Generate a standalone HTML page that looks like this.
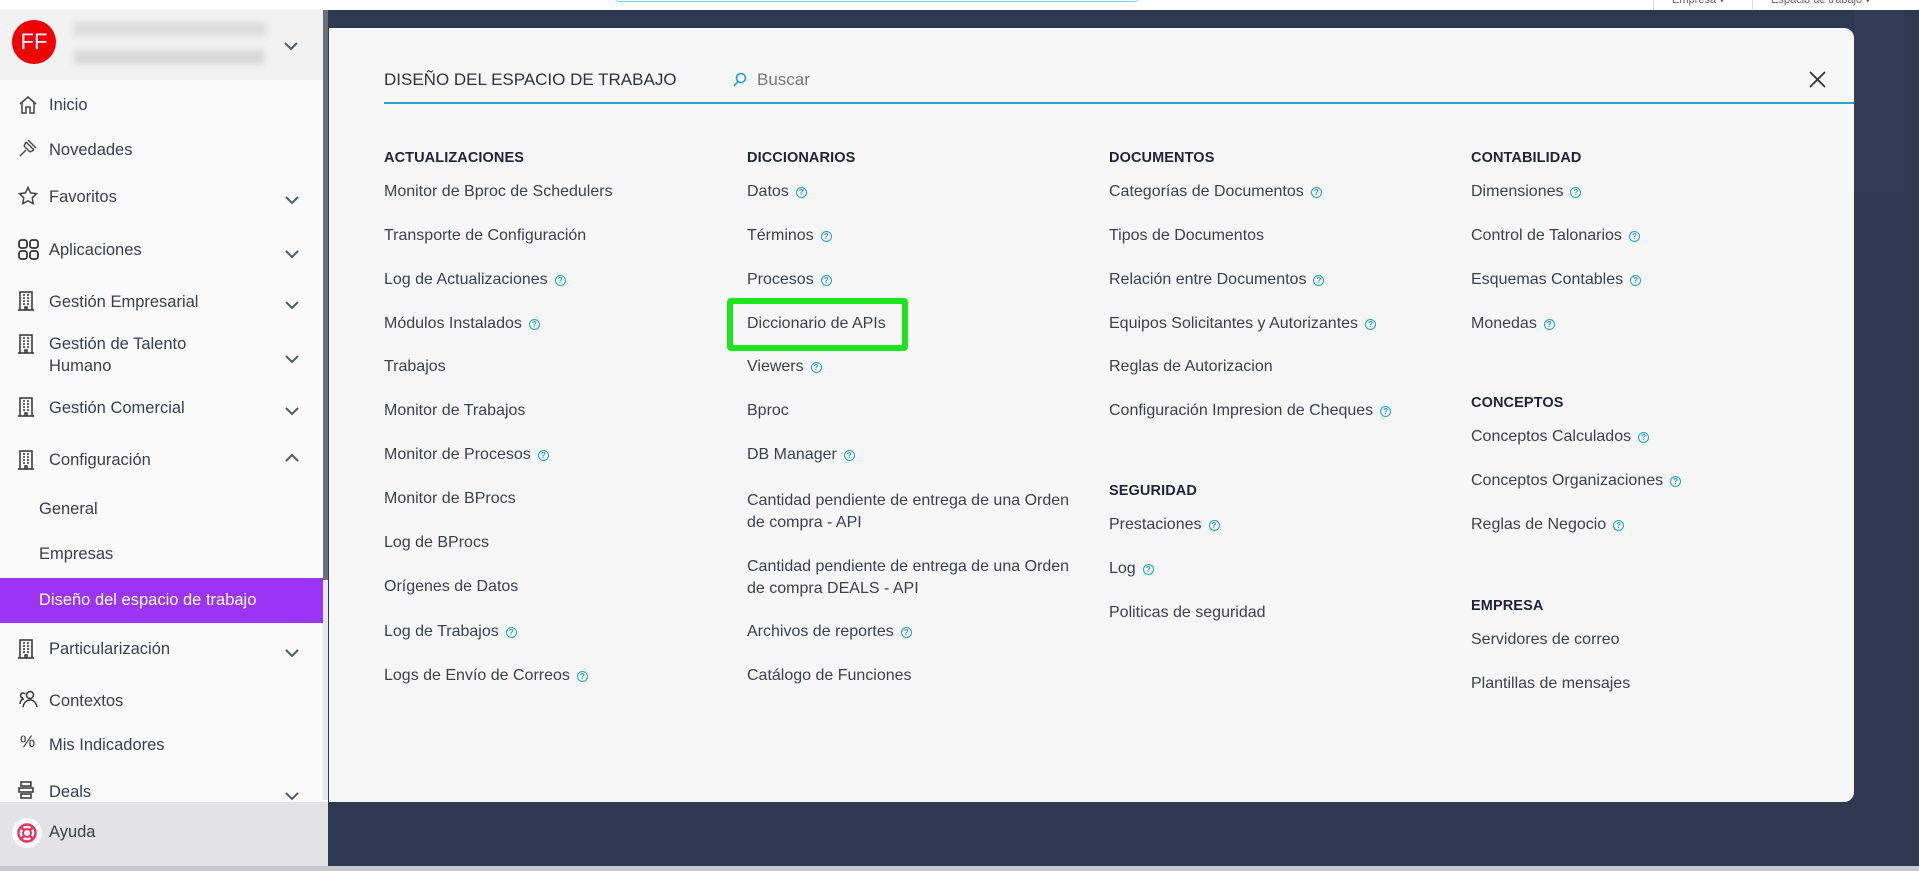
<!DOCTYPE html>
<html><head><meta charset="utf-8"><style>
*{margin:0;padding:0;box-sizing:border-box}
body{width:1919px;height:871px;overflow:hidden;background:#fff;font-family:"Liberation Sans",sans-serif;position:relative;color:#3a3d4a}
.a{position:absolute;white-space:nowrap}
.t{position:absolute;white-space:nowrap;font-size:16px;line-height:22px;color:#3c3f4c}
.h{position:absolute;white-space:nowrap;font-size:14.5px;font-weight:bold;line-height:22px;color:#1f2238;letter-spacing:.1px}
.q{display:inline-block;width:11px;height:11px;border:1.3px solid #1fa0c8;border-radius:50%;font-size:8px;line-height:9px;text-align:center;color:#1fa0c8;margin-left:7px;vertical-align:1px;font-weight:bold}
.s{position:absolute;left:49px;font-size:16.5px;line-height:22px;color:#3a3d4a;white-space:nowrap}
.ic{position:absolute;left:18px}
.ch{position:absolute;left:285px}
</style></head><body>
<div class="a" style="left:0;top:0;width:1919px;height:10px;background:#fff"></div>
<div class="a" style="left:616px;top:-10px;width:522px;height:12px;border:1px solid #7fd6e6;border-radius:3px"></div>
<div class="a" style="left:1653px;top:0;width:1px;height:10px;background:#ddd"></div>
<div class="a" style="left:1752px;top:0;width:1px;height:10px;background:#ddd"></div>
<div class="a" style="left:1672px;top:-7px;font-size:11px;color:#666">Empresa ▾</div>
<div class="a" style="left:1771px;top:-7px;font-size:11px;color:#666">Espacio de trabajo ▾</div>
<div class="a" style="left:328px;top:10px;width:1591px;height:856px;background:#2d3950"></div>
<div class="a" style="left:1854px;top:10px;width:50px;height:182px;background:#313d54"></div>
<div class="a" style="left:0;top:866px;width:1919px;height:5px;background:#c9c9cc"></div>
<div class="a" style="left:0;top:10px;width:323px;height:856px;background:#fbfbfb"></div>
<div class="a" style="left:0;top:10px;width:323px;height:70px;background:#f2f2f3"></div>
<div class="a" style="left:323px;top:10px;width:5px;height:570px;background:#6b7078"></div>
<div class="a" style="left:323px;top:580px;width:5px;height:220px;background:#e8e8ea"></div>
<div class="a" style="left:12px;top:20px;width:44px;height:44px;border-radius:50%;background:#f00000;color:#fff;font-size:22px;line-height:44px;text-align:center">FF</div>
<div class="a" style="left:74px;top:22px;width:192px;height:14px;background:#ddd;filter:blur(3px)"></div>
<div class="a" style="left:74px;top:50px;width:190px;height:14px;background:#d8d8d8;filter:blur(3px)"></div>
<svg class="a" style="left:284px;top:42px" width="14" height="9"><path d="M1 1l6 6 6-6" fill="none" stroke="#555b66" stroke-width="2"/></svg>

<svg class="ic" style="top:95px" width="20" height="20" viewBox="0 0 20 20"><path d="M2 9l8-7 8 7M4 7v11h4v-6h4v6h4V7" fill="none" stroke="#444" stroke-width="1.5"/></svg>
<div class="s" style="top:94px">Inicio</div>
<svg class="ic" style="top:138px" width="20" height="20" viewBox="0 0 20 20"><path d="M2 18l6-6M6 8l6 6M8 4l8 8M10 2l8 8M8 4l-2 4M12 14l4-2" fill="none" stroke="#444" stroke-width="1.4"/></svg>
<div class="s" style="top:139px">Novedades</div>
<svg class="ic" style="top:186px" width="20" height="20" viewBox="0 0 20 20"><path d="M10 1.5l2.6 5.4 5.9.8-4.3 4.1 1 5.8L10 14.8 4.8 17.6l1-5.8L1.5 7.7l5.9-.8z" fill="none" stroke="#444" stroke-width="1.5"/></svg>
<div class="s" style="top:186px">Favoritos</div>
<svg class="ic" style="top:239px" width="22" height="22" viewBox="0 0 22 22"><rect x="1" y="1" width="8" height="8" rx="2.5" fill="none" stroke="#333" stroke-width="1.8"/><rect x="12" y="1" width="8" height="8" rx="2.5" fill="none" stroke="#333" stroke-width="1.8"/><rect x="1" y="12" width="8" height="8" rx="2.5" fill="none" stroke="#333" stroke-width="1.8"/><rect x="12" y="12" width="8" height="8" rx="2.5" fill="none" stroke="#333" stroke-width="1.8"/></svg>
<div class="s" style="top:239px">Aplicaciones</div>
<div class="s" style="top:291px">Gestión Empresarial</div>
<div class="s" style="top:333px">Gestión de Talento</div>
<div class="s" style="top:355px">Humano</div>
<div class="s" style="top:397px">Gestión Comercial</div>
<div class="s" style="top:449px">Configuración</div>
<div class="s" style="left:39px;top:498px">General</div>
<div class="s" style="left:39px;top:543px">Empresas</div>
<div class="a" style="left:0;top:578px;width:323px;height:45px;background:#9b34f5"></div>
<div class="s" style="left:39px;top:589px;color:#fff">Diseño del espacio de trabajo</div>
<div class="s" style="top:638px">Particularización</div>
<svg class="ic" style="top:690px" width="22" height="20" viewBox="0 0 22 20"><circle cx="12" cy="5" r="3.5" fill="none" stroke="#333" stroke-width="1.5"/><path d="M5 17c1-5 4-7 7-7s6 2 7 7M2 14c0-3 2-5 4-5M5 8a2.5 2.5 0 1 1 2-4" fill="none" stroke="#333" stroke-width="1.5"/></svg>
<div class="s" style="top:690px">Contextos</div>
<div class="a" style="left:20px;top:732px;font-size:17px;color:#333">%</div>
<div class="s" style="top:734px">Mis Indicadores</div>
<svg class="ic" style="top:780px" width="18" height="20" viewBox="0 0 18 20"><rect x="3" y="2" width="10" height="4" fill="none" stroke="#333" stroke-width="1.5"/><rect x="1" y="8" width="14" height="4" fill="none" stroke="#333" stroke-width="1.5"/><rect x="3" y="14" width="10" height="4" fill="none" stroke="#333" stroke-width="1.5"/></svg>
<div class="s" style="top:781px">Deals</div>
<svg class="ic" style="top:291px" width="16" height="20" viewBox="0 0 16 20"><path d="M2 19V1h12v18M0 19h16M5 4h2M9 4h2M5 7h2M9 7h2M5 10h2M9 10h2M5 13h2M9 13h2M7 19v-3h2v3" fill="none" stroke="#333" stroke-width="1.5"/></svg>
<svg class="ic" style="top:334px" width="16" height="20" viewBox="0 0 16 20"><path d="M2 19V1h12v18M0 19h16M5 4h2M9 4h2M5 7h2M9 7h2M5 10h2M9 10h2M5 13h2M9 13h2M7 19v-3h2v3" fill="none" stroke="#333" stroke-width="1.5"/></svg>
<svg class="ic" style="top:397px" width="16" height="20" viewBox="0 0 16 20"><path d="M2 19V1h12v18M0 19h16M5 4h2M9 4h2M5 7h2M9 7h2M5 10h2M9 10h2M5 13h2M9 13h2M7 19v-3h2v3" fill="none" stroke="#333" stroke-width="1.5"/></svg>
<svg class="ic" style="top:450px" width="16" height="20" viewBox="0 0 16 20"><path d="M2 19V1h12v18M0 19h16M5 4h2M9 4h2M5 7h2M9 7h2M5 10h2M9 10h2M5 13h2M9 13h2M7 19v-3h2v3" fill="none" stroke="#333" stroke-width="1.5"/></svg>
<svg class="ic" style="top:639px" width="16" height="20" viewBox="0 0 16 20"><path d="M2 19V1h12v18M0 19h16M5 4h2M9 4h2M5 7h2M9 7h2M5 10h2M9 10h2M5 13h2M9 13h2M7 19v-3h2v3" fill="none" stroke="#333" stroke-width="1.5"/></svg>
<svg class="ch" style="top:196px" width="14" height="9"><path d="M1 1l6 6 6-6" fill="none" stroke="#555b66" stroke-width="2"/></svg>
<svg class="ch" style="top:250px" width="14" height="9"><path d="M1 1l6 6 6-6" fill="none" stroke="#555b66" stroke-width="2"/></svg>
<svg class="ch" style="top:301px" width="14" height="9"><path d="M1 1l6 6 6-6" fill="none" stroke="#555b66" stroke-width="2"/></svg>
<svg class="ch" style="top:355px" width="14" height="9"><path d="M1 1l6 6 6-6" fill="none" stroke="#555b66" stroke-width="2"/></svg>
<svg class="ch" style="top:407px" width="14" height="9"><path d="M1 1l6 6 6-6" fill="none" stroke="#555b66" stroke-width="2"/></svg>
<svg class="ch" style="top:453px" width="14" height="9"><path d="M1 8l6-6 6 6" fill="none" stroke="#555b66" stroke-width="2"/></svg>
<svg class="ch" style="top:649px" width="14" height="9"><path d="M1 1l6 6 6-6" fill="none" stroke="#555b66" stroke-width="2"/></svg>
<svg class="ch" style="top:792px" width="14" height="9"><path d="M1 1l6 6 6-6" fill="none" stroke="#555b66" stroke-width="2"/></svg>
<div class="a" style="left:0;top:802px;width:328px;height:64px;background:#e3e3e5"></div>
<div class="a" style="left:12px;top:818px;width:30px;height:30px;border-radius:50%;background:#fff"></div>
<svg class="a" style="left:16px;top:822px" width="22" height="22" viewBox="0 0 22 22"><circle cx="11" cy="11" r="8.5" fill="none" stroke="#f0305a" stroke-width="2.4"/><circle cx="11" cy="11" r="4" fill="none" stroke="#f0305a" stroke-width="2"/><path d="M5 5l3 3M17 5l-3 3M5 17l3-3M17 17l-3-3" stroke="#f0305a" stroke-width="2.4"/></svg>
<div class="s" style="top:821px">Ayuda</div>
<div class="a" style="left:329px;top:28px;width:1525px;height:774px;background:#f7f7f7;border-radius:0 10px 10px 0"></div>
<div class="a" style="left:384px;top:69px;font-size:17px;color:#2e3140;line-height:22px">DISEÑO DEL ESPACIO DE TRABAJO</div>
<svg class="a" style="left:733px;top:72px" width="14" height="16" viewBox="0 0 14 16"><circle cx="8" cy="6" r="4.5" fill="none" stroke="#1fa0c8" stroke-width="1.6"/><path d="M5 9.5L1 14" stroke="#1fa0c8" stroke-width="1.6"/></svg>
<div class="a" style="left:757px;top:69px;font-size:17px;color:#777;line-height:22px">Buscar</div>
<svg class="a" style="left:1809px;top:71px" width="17" height="17"><path d="M1 1l15 15M16 1L1 16" stroke="#333" stroke-width="1.8"/></svg>
<div class="a" style="left:384px;top:102px;width:1470px;height:2px;background:#2aa6c0"></div>

<div class="h" style="left:384px;top:147px">ACTUALIZACIONES</div>
<div class="t" style="left:384px;top:181px">Monitor de Bproc de Schedulers</div>
<div class="t" style="left:384px;top:225px">Transporte de Configuración</div>
<div class="t" style="left:384px;top:269px">Log de Actualizaciones<span class="q">?</span></div>
<div class="t" style="left:384px;top:313px">Módulos Instalados<span class="q">?</span></div>
<div class="t" style="left:384px;top:356px">Trabajos</div>
<div class="t" style="left:384px;top:400px">Monitor de Trabajos</div>
<div class="t" style="left:384px;top:444px">Monitor de Procesos<span class="q">?</span></div>
<div class="t" style="left:384px;top:488px">Monitor de BProcs</div>
<div class="t" style="left:384px;top:532px">Log de BProcs</div>
<div class="t" style="left:384px;top:576px">Orígenes de Datos</div>
<div class="t" style="left:384px;top:621px">Log de Trabajos<span class="q">?</span></div>
<div class="t" style="left:384px;top:665px">Logs de Envío de Correos<span class="q">?</span></div>

<div class="h" style="left:747px;top:147px">DICCIONARIOS</div>
<div class="t" style="left:747px;top:181px">Datos<span class="q">?</span></div>
<div class="t" style="left:747px;top:225px">Términos<span class="q">?</span></div>
<div class="t" style="left:747px;top:269px">Procesos<span class="q">?</span></div>
<div class="a" style="left:727px;top:298px;width:181px;height:53px;border:6px solid #1ee61e;border-radius:4px"></div>
<div class="t" style="left:747px;top:313px">Diccionario de APIs</div>
<div class="t" style="left:747px;top:356px">Viewers<span class="q">?</span></div>
<div class="t" style="left:747px;top:400px">Bproc</div>
<div class="t" style="left:747px;top:444px">DB Manager<span class="q">?</span></div>
<div class="t" style="left:747px;top:490px">Cantidad pendiente de entrega de una Orden</div>
<div class="t" style="left:747px;top:512px">de compra - API</div>
<div class="t" style="left:747px;top:556px">Cantidad pendiente de entrega de una Orden</div>
<div class="t" style="left:747px;top:578px">de compra DEALS - API</div>
<div class="t" style="left:747px;top:621px">Archivos de reportes<span class="q">?</span></div>
<div class="t" style="left:747px;top:665px">Catálogo de Funciones</div>

<div class="h" style="left:1109px;top:147px">DOCUMENTOS</div>
<div class="t" style="left:1109px;top:181px">Categorías de Documentos<span class="q">?</span></div>
<div class="t" style="left:1109px;top:225px">Tipos de Documentos</div>
<div class="t" style="left:1109px;top:269px">Relación entre Documentos<span class="q">?</span></div>
<div class="t" style="left:1109px;top:313px">Equipos Solicitantes y Autorizantes<span class="q">?</span></div>
<div class="t" style="left:1109px;top:356px">Reglas de Autorizacion</div>
<div class="t" style="left:1109px;top:400px">Configuración Impresion de Cheques<span class="q">?</span></div>
<div class="h" style="left:1109px;top:480px">SEGURIDAD</div>
<div class="t" style="left:1109px;top:514px">Prestaciones<span class="q">?</span></div>
<div class="t" style="left:1109px;top:558px">Log<span class="q">?</span></div>
<div class="t" style="left:1109px;top:602px">Politicas de seguridad</div>

<div class="h" style="left:1471px;top:147px">CONTABILIDAD</div>
<div class="t" style="left:1471px;top:181px">Dimensiones<span class="q">?</span></div>
<div class="t" style="left:1471px;top:225px">Control de Talonarios<span class="q">?</span></div>
<div class="t" style="left:1471px;top:269px">Esquemas Contables<span class="q">?</span></div>
<div class="t" style="left:1471px;top:313px">Monedas<span class="q">?</span></div>
<div class="h" style="left:1471px;top:392px">CONCEPTOS</div>
<div class="t" style="left:1471px;top:426px">Conceptos Calculados<span class="q">?</span></div>
<div class="t" style="left:1471px;top:470px">Conceptos Organizaciones<span class="q">?</span></div>
<div class="t" style="left:1471px;top:514px">Reglas de Negocio<span class="q">?</span></div>
<div class="h" style="left:1471px;top:595px">EMPRESA</div>
<div class="t" style="left:1471px;top:629px">Servidores de correo</div>
<div class="t" style="left:1471px;top:673px">Plantillas de mensajes</div>
</body></html>
